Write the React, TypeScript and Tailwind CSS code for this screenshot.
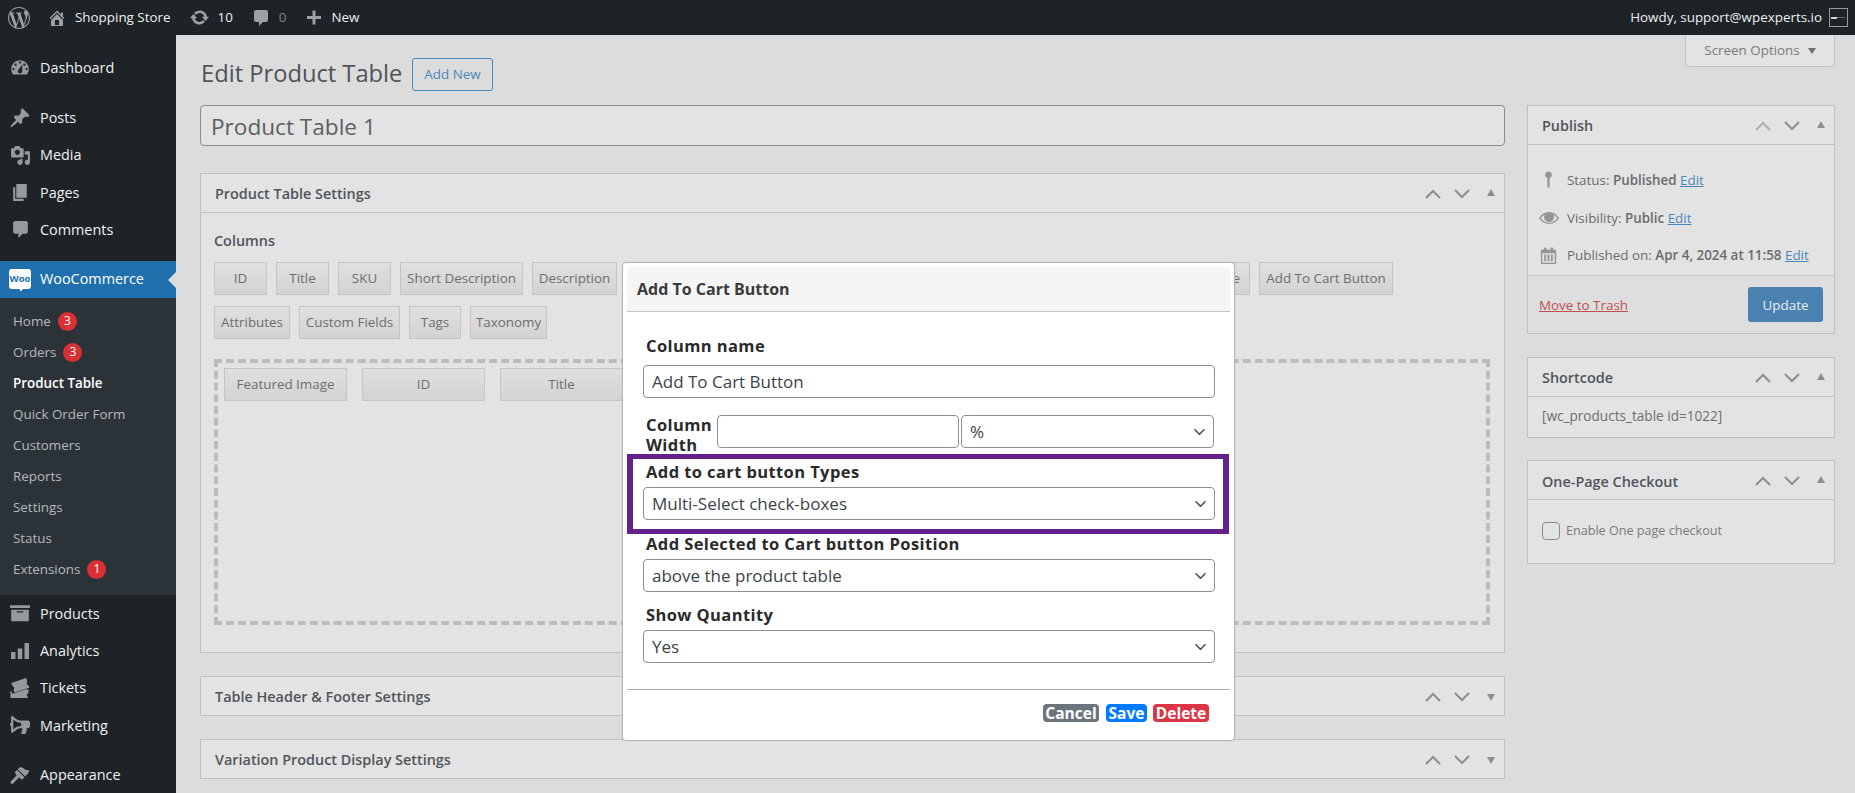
import type { ReactNode } from 'react';
import { SiWordpress } from 'react-icons/si';
import { FaBullhorn } from 'react-icons/fa';

const icons: Record<string, string> = {
    home: 'M16 8.5l1.53 1.53-1.06 1.06L10 4.62l-6.47 6.47-1.06-1.06L10 2.5l4 4v-2h2v4zm-6-2.46l6 5.99V18H4v-5.97zM12 17v-5H8v5h4z',
    update: 'M10.2 3.28c3.53 0 6.43 2.61 6.92 6h2.08l-3.5 4-3.5-4h2.32c-.45-1.97-2.21-3.45-4.32-3.45-1.45 0-2.73.71-3.54 1.78L4.95 5.66C6.23 4.2 8.11 3.28 10.2 3.28zm-.4 13.44c-3.52 0-6.43-2.61-6.92-6H.8l3.5-4c1.17 1.33 2.33 2.67 3.5 4H5.48c.45 1.97 2.21 3.45 4.32 3.45 1.45 0 2.73-.71 3.54-1.78l1.71 1.95c-1.28 1.46-3.15 2.38-5.25 2.38z',
    comment: 'M5 2h10c1.1 0 2 .9 2 2v8c0 1.1-.9 2-2 2h-3l-4 4v-4H5c-1.1 0-2-.9-2-2V4c0-1.1.9-2 2-2z',
    plus: 'M17 8v3h-5.500v5.500h-3V11H3V8h5.500V2.500h3V8H17z',
    dashboard: 'M3.76 16h12.48c1.1-1.37 1.76-3.11 1.76-5 0-4.42-3.58-8-8-8s-8 3.58-8 8c0 1.89.66 3.63 1.76 5zM10 4c.55 0 1 .45 1 1s-.45 1-1 1-1-.45-1-1 .45-1 1-1zM6 6c.55 0 1 .45 1 1s-.45 1-1 1-1-.45-1-1 .45-1 1-1zm8 0c.55 0 1 .45 1 1s-.45 1-1 1-1-.45-1-1 .45-1 1-1zm-5.370 5.550L12 7v6c0 1.100-.9 2-2 2s-2-.9-2-2c0-.57.24-1.080.63-1.450zM4 10c.55 0 1 .45 1 1s-.45 1-1 1-1-.45-1-1 .45-1 1-1zm12 0c.55 0 1 .45 1 1s-.45 1-1 1-1-.45-1-1 .45-1 1-1z',
    posts: 'M10.440 3.020l1.820-1.820 6.360 6.350-1.830 1.820c-1.050-.68-2.480-.57-3.410.36l-.75.75c-.92.93-1.040 2.350-.35 3.410l-1.830 1.820-2.410-2.410-2.800 2.790c-.42.42-3.380 2.710-3.800 2.290s1.860-3.390 2.280-3.810l2.790-2.790L4.100 9.360l1.830-1.820c1.050.69 2.480.57 3.400-.36l.75-.75c.93-.92 1.050-2.350.36-3.410z',
    media: 'M13 11V4c0-.55-.45-1-1-1h-1.670L9 1H5L3.670 3H2c-.55 0-1 .45-1 1v7c0 .55.45 1 1 1h10c.55 0 1-.45 1-1zM7 4.500c1.380 0 2.500 1.120 2.500 2.500S8.380 9.500 7 9.500 4.500 8.380 4.500 7 5.620 4.500 7 4.500zM14 6h5v10.500c0 1.380-1.120 2.500-2.500 2.500S14 17.880 14 16.500s1.120-2.500 2.500-2.500c.17 0 .34.02.5.05V9h-3V6zm-4 8.050V13h2v3.500c0 1.380-1.120 2.500-2.500 2.500S7 17.880 7 16.500 8.120 14 9.500 14c.17 0 .34.02.5.05z',
    pages: 'M6 15V2h10v13H6zm-1 1h8v2H3V5h2v11z',
    products: 'M19 3v2.500H1V3h18zM2 7h16v10.500H2V7zm11 2.500v-1H7v1h6z',
    analytics: 'M1 11h4.500v7H1v-7zm6.750-3.500h4.500V18h-4.500V7.500zM14.500 2H19v16h-4.500V2z',
    tickets: 'M2 5.500L15.500 1l1.200 3.100a1.900 1.900 0 0 0 .9 3.300l.9 2.300-13.500 4.500-.9-2.400a1.900 1.900 0 0 0-.9-3.300L2 5.500zM.6 13.500l1.600-.5.9 2.300 13-4.300.1.300 1.800.3-.6 3.100a1.900 1.900 0 0 0-.4 3.300L17.500 19H1.500l-.4-2.100a1.900 1.900 0 0 0 .2-2.400l-.7-1z',
    appearance: 'M14.480 11.060L7.410 3.990l1.500-1.500c.5-.56 2.300-.47 3.510.32 1.210.8 1.430 1.280 2.660 1.810 1.240.53 2.560.37 3.070.24l-.03.46c-.1 1.400-.7 2.500-1.400 3.300-1 1.100-1.200 1.400-2.230 2.440zm-.71.710L6.700 4.700 4.930 6.470c-.39.39-.39 1.020 0 1.410l1.060 1.060c.39.39.39 1.020 0 1.410-1.770 1.770-3.540 3.530-5.300 5.300-.39.39-.39 1.020 0 1.410l.71.71c.39.39 1.020.39 1.410 0 1.770-1.760 3.530-3.530 5.300-5.300.39-.39 1.020-.39 1.410 0l1.060 1.060c.39.39 1.020.39 1.410 0z',
    pin: 'M10 1.500a3.500 3.500 0 0 1 1.200 6.790V17.500c0 .7-.5 1.200-1.200 1.200s-1.200-.5-1.200-1.200V8.290A3.500 3.500 0 0 1 10 1.500z',
    eye: 'M19.700 9.400C17.700 6 14 3.900 10 3.900S2.300 6 .3 9.400L0 10l.3.600c2 3.400 5.700 5.500 9.700 5.500s7.700-2.100 9.700-5.500l.3-.600-.3-.600zM10 14.800c-3.300 0-6.400-1.800-8.200-4.800 1-1.500 2.300-2.700 3.900-3.500C5.300 7.200 5 8.100 5 9c0 2.800 2.200 5 5 5s5-2.200 5-5c0-.9-.3-1.800-.7-2.500 1.600.8 2.900 2 3.900 3.500-1.800 3-4.900 4.800-8.200 4.800z',
    calendar: 'M15 4h3v15H2V4h3V3c0-.41.15-.76.44-1.060.29-.29.65-.44 1.060-.44s.77.15 1.060.44c.29.3.44.65.44 1.060v1h4V3c0-.41.15-.76.44-1.060.29-.29.65-.44 1.060-.44s.77.15 1.060.44c.29.3.44.65.44 1.060v1zM3.500 7.500v10h13v-10h-13zM5.500 9h2v7h-2V9zm3.500 0h2v7H9V9zm3.500 0h2v7h-2V9z',
};

function Dash({ name, size = 20, className = '' }: { name: string; size?: number; className?: string }) {
    return (
        <svg viewBox="0 0 20 20" width={size} height={size} fill="currentColor" className={className}>
            <path d={icons[name]} />
        </svg>
    );
}

function WooLogo() {
    return (
        <svg viewBox="0 0 22 23" width={22} height={23}>
            <path d="M3 0h16a3 3 0 0 1 3 3v14a3 3 0 0 1-3 3h-5l-2.500 2.500-.8-2.500H3a3 3 0 0 1-3-3V3a3 3 0 0 1 3-3z" fill="#fff" />
            <text x="11" y="13" textAnchor="middle" fontSize="9.500" fontWeight="700" fill="#2271b1" fontFamily="'Open Sans', sans-serif">Woo</text>
        </svg>
    );
}

function Badge({ n }: { n: number }) {
    return (
        <span className="ml-[7px] flex h-[19px] w-[19px] items-center justify-center rounded-full bg-[#d92f35] text-[12px] leading-none text-white">
            {n}
        </span>
    );
}

function MenuItem({ icon, label }: { icon: ReactNode; label: string }) {
    return (
        <div className="flex h-[37.3px] items-center text-[14.4px] text-[#f0f0f1]">
            <span className="flex w-[40px] justify-center text-[#959a9e]">{icon}</span>
            {label}
        </div>
    );
}

function SubItem({ label, badge, active }: { label: string; badge?: number; active?: boolean }) {
    return (
        <div className={`flex h-[31px] items-center pl-[13px] text-[13.4px] ${active ? 'font-semibold text-white' : 'text-[#b4b9be]'}`}>
            {label}
            {badge ? <Badge n={badge} /> : null}
        </div>
    );
}

function Sidebar() {
    return (
        <aside className="w-[176px] shrink-0 bg-[#1d2327]">
            <div className="pt-[14px]">
                <MenuItem icon={<Dash name="dashboard" size={22} />} label="Dashboard" />
            </div>
            <div className="pt-[12.8px]">
                <MenuItem icon={<Dash name="posts" size={22} />} label="Posts" />
                <MenuItem icon={<Dash name="media" size={21} />} label="Media" />
                <MenuItem icon={<Dash name="pages" size={21} />} label="Pages" />
                <MenuItem icon={<Dash name="comment" size={21} />} label="Comments" />
            </div>
            <div className="relative mt-[12.5px] flex h-[37px] items-center bg-[#1f70ad] text-[14.4px] text-white">
                <span className="flex w-[40px] justify-center pt-[2px]"><WooLogo /></span>
                WooCommerce
                <span className="absolute right-0 top-[11px] h-0 w-0 border-y-[8px] border-r-[8px] border-y-transparent border-r-[#dcdcdc]" />
            </div>
            <div className="bg-[#2c3338] pb-[10px] pt-[8px]">
                <SubItem label="Home" badge={3} />
                <SubItem label="Orders" badge={3} />
                <SubItem label="Product Table" active />
                <SubItem label="Quick Order Form" />
                <SubItem label="Customers" />
                <SubItem label="Reports" />
                <SubItem label="Settings" />
                <SubItem label="Status" />
                <SubItem label="Extensions" badge={1} />
            </div>
            <MenuItem icon={<Dash name="products" size={22} />} label="Products" />
            <MenuItem icon={<Dash name="analytics" size={20} />} label="Analytics" />
            <MenuItem icon={<Dash name="tickets" size={22} />} label="Tickets" />
            <MenuItem icon={<FaBullhorn size={20} className="-scale-x-100" />} label="Marketing" />
            <div className="pt-[12.5px]">
                <MenuItem icon={<Dash name="appearance" size={21} />} label="Appearance" />
            </div>
        </aside>
    );
}

function TopBar() {
    return (
        <header className="flex h-[35px] shrink-0 items-center bg-[#1d2327] text-[13.4px] text-[#f0f0f1]">
            <SiWordpress size={22} className="ml-[8px] text-[#9ba0a5]" />
            <Dash name="home" size={20} className="ml-[17px] text-[#9ba0a5]" />
            <span className="ml-[8px]">Shopping Store</span>
            <Dash name="update" size={21} className="ml-[18px] text-[#9ba0a5]" />
            <span className="ml-[8px]">10</span>
            <Dash name="comment" size={20} className="ml-[18px] text-[#9ba0a5]" />
            <span className="ml-[8px] text-[#7d8387]">0</span>
            <Dash name="plus" size={20} className="ml-[17px] text-[#9ba0a5]" />
            <span className="ml-[8px]">New</span>
            <span className="ml-auto">Howdy, support@wpexperts.io</span>
            <span className="mx-[7px] flex h-[19px] w-[19px] items-center border border-[#9a9a9a] bg-[#1d2327] pl-[1px]">
                <span className="h-[2px] w-[6px] bg-[#d5d5d5]" />
                <span className="h-[1px] w-[8px] bg-[#666]" />
            </span>
        </header>
    );
}

function Chip({ label, className = '' }: { label: string; className?: string }) {
    return (
        <div className={`flex h-[33px] items-center justify-center whitespace-nowrap border border-[#c4c4c4] bg-gradient-to-b from-[#e0e0e0] to-[#d3d3d3] px-[6px] text-[13.4px] text-[#6e6e6e] ${className}`}>
            {label}
        </div>
    );
}

function Box({ title, children, dim, collapsed }: { title: string; children?: ReactNode; dim?: boolean; collapsed?: boolean }) {
    return (
        <section className="border border-[#c0c0c0] bg-[#e3e3e3]">
            <div className={`flex items-center justify-between pl-[14px] ${children ? 'h-[39px] border-b border-[#c0c0c0] pt-[2px]' : 'h-[38px] pt-[1px]'}`}>
                <h2 className="text-[14.4px] font-semibold text-[#50555a]">{title}</h2>
                <div className="flex items-center text-[#8e8e8e]">
                    <svg viewBox="0 0 16 10" width={16} height={10} fill="none" stroke="currentColor" strokeWidth={2} className={dim ? 'opacity-60' : ''}>
                        <path d="M1 9l7-7 7 7" />
                    </svg>
                    <svg viewBox="0 0 16 10" width={16} height={10} fill="none" stroke="currentColor" strokeWidth={2} className="ml-[13px]">
                        <path d="M1 1l7 7 7-7" />
                    </svg>
                    {collapsed ? (
                        <span className="ml-[17px] mr-[9px] mt-[2px] h-0 w-0 border-x-[4.500px] border-t-[7px] border-x-transparent border-t-[#8e8e8e]" />
                    ) : (
                        <span className="ml-[17px] mr-[9px] mb-[3px] h-0 w-0 border-x-[4.500px] border-b-[7px] border-x-transparent border-b-[#8e8e8e]" />
                    )}
                </div>
            </div>
            {children}
        </section>
    );
}

function Chevron() {
    return (
        <svg viewBox="0 0 14 10" width={13} height={9} fill="none" stroke="#50575e" strokeWidth={1.800} className="pointer-events-none absolute right-[8px] top-1/2 -translate-y-1/2">
            <path d="M1.500 2l5.500 5.500L12.500 2" />
        </svg>
    );
}

function Field({ label, value }: { label: string; value: string }) {
    return (
        <div>
            <div className="px-[3px] text-[16.5px] font-bold leading-[20px] tracking-[0.4px] text-[#2a2a2a]">{label}</div>
            <div className="relative mt-[5px]">
                <select defaultValue={value} className="h-[33px] w-full appearance-none rounded-[4px] border border-[#8c8f94] bg-white pl-[8px] text-[17px] text-[#3c434a]">
                    <option>{value}</option>
                </select>
                <Chevron />
            </div>
        </div>
    );
}

function Modal() {
    return (
        <div className="absolute left-[446px] top-[227px] h-[479px] w-[613px] rounded-[4px] border border-[#b5b5b5] bg-white p-[4px] shadow-[0_0_2px_rgba(0,0,0,0.1)]">
            <div className="flex h-[45px] items-center rounded-t-[4px] border-b border-[#c8c8c8] bg-[#f5f5f5] pl-[10px] text-[16px] font-bold text-[#3a3a3a]">
                Add To Cart Button
            </div>
            <div className="pl-[16px] pr-[15px] pt-[24px]">
                <div className="px-[3px] text-[16.5px] font-bold leading-[20px] tracking-[0.4px] text-[#2a2a2a]">Column name</div>
                <input defaultValue="Add To Cart Button" className="mt-[9px] h-[33px] w-full rounded-[4px] border border-[#8c8f94] bg-white pl-[8px] text-[17px] text-[#3c434a]" />
                <div className="mt-[17px] flex h-[33px]">
                    <div className="w-[74px] shrink-0 px-[3px] text-[16.5px] font-bold leading-[20px] tracking-[0.4px] text-[#2a2a2a]">Column Width</div>
                    <input className="h-[33px] w-[242px] rounded-[4px] border border-[#8c8f94] bg-white" />
                    <div className="relative ml-[2px] w-[253px]">
                        <select defaultValue="%" className="h-[33px] w-full appearance-none rounded-[4px] border border-[#8c8f94] bg-white pl-[8px] text-[17px] text-[#3c434a]">
                            <option>%</option>
                        </select>
                        <Chevron />
                    </div>
                </div>
                <div className="mt-[14px]">
                    <Field label="Add to cart button Types" value="Multi-Select check-boxes" />
                </div>
                <div className="mt-[14px]">
                    <Field label="Add Selected to Cart button Position" value="above the product table" />
                </div>
                <div className="mt-[13px]">
                    <Field label="Show Quantity" value="Yes" />
                </div>
            </div>
            <div className="mt-[26px] border-t border-[#aeaeae]" />
            <div className="flex justify-end pr-[21px] pt-[14px] text-[15.5px] font-bold leading-[18px] text-white">
                <button className="w-[56px] whitespace-nowrap rounded-[4px] bg-[#6c757d]">Cancel</button>
                <button className="ml-[7px] w-[41px] whitespace-nowrap rounded-[4px] bg-[#007bff]">Save</button>
                <button className="ml-[6px] w-[56px] whitespace-nowrap rounded-[4px] bg-[#dc3545]">Delete</button>
            </div>
            {/* annotation around the button type field */}
            <div className="absolute left-[4px] top-[191px] h-[80px] w-[602px] border-x-[6px] border-y-[5px] border-[#65218b]" />
        </div>
    );
}

function PublishRow({ icon, children }: { icon: string; children: ReactNode }) {
    return (
        <div className="flex h-[37.8px] items-center text-[13.4px] text-[#6b6b6b]">
            <span className="flex w-[28px] justify-start text-[#959595]">
                <Dash name={icon} size={icon === 'eye' ? 20 : 19} />
            </span>
            <span>{children}</span>
        </div>
    );
}

function EditLink() {
    return <a className="text-[#4a87bb] underline">Edit</a>;
}

export default function App() {
    return (
        <div className="flex h-[793px] w-[1855px] flex-col overflow-hidden font-['Open_Sans',sans-serif]">
            <TopBar />
            <div className="flex min-h-0 flex-1">
                <Sidebar />
                <main className="relative flex-1 bg-[#dcdcdc] pl-[24px] pr-[20px] pt-[23px]">
                    <div className="absolute right-[20px] top-0 flex h-[32px] w-[150px] items-center justify-center rounded-b-[4px] border border-t-0 border-[#c3c3c3] bg-[#e3e3e3] text-[13.4px] text-[#7a7a7a]">
                        Screen Options
                        <span className="ml-[8px] h-0 w-0 border-x-[4.500px] border-t-[6px] border-x-transparent border-t-[#707070]" />
                    </div>
                    <div className="flex h-[32px] items-center">
                        <h1 className="pl-[1px] text-[23.7px] text-[#4d5358]">Edit Product Table</h1>
                        <a className="ml-[10px] flex h-[33px] items-center rounded-[3px] border border-[#4a87bb] px-[11px] text-[13.4px] text-[#4a87bb]">Add New</a>
                    </div>
                    <div className="mt-[15px] flex gap-[22px]">
                        <div className="w-[1305px]">
                            <div className="flex h-[41px] items-center rounded-[4px] border border-[#8c8c8c] bg-[#e3e3e3] pl-[10px] pt-[3px] text-[22.6px] text-[#5b5f63]">Product Table 1</div>
                            <div className="mt-[27px]">
                                <Box title="Product Table Settings">
                                    <div className="h-[439px] px-[13px] pt-[18px]">
                                        <h3 className="text-[14.4px] font-semibold leading-[20px] text-[#50555a]">Columns</h3>
                                        <div className="mt-[11px] flex w-[1200px] flex-wrap gap-x-[9px] gap-y-[11px]">
                                            <Chip label="ID" className="w-[53px]" />
                                            <Chip label="Title" className="w-[53px]" />
                                            <Chip label="SKU" className="w-[53px]" />
                                            <Chip label="Short Description" className="w-[123px]" />
                                            <Chip label="Description" className="w-[85px]" />
                                            <Chip label="Categories" className="w-[535px]" />
                                            <Chip label="Sale Price" className="w-[80px]" />
                                            <Chip label="Add To Cart Button" className="w-[134px]" />
                                            <Chip label="Attributes" className="w-[76px]" />
                                            <Chip label="Custom Fields" className="w-[101px]" />
                                            <Chip label="Tags" className="w-[52px]" />
                                            <Chip label="Taxonomy" className="w-[77px]" />
                                        </div>
                                        <div className="mt-[20px] flex h-[266px] w-[1276px] gap-[15px] border-[4px] border-dashed border-[#bcbcbc] px-[6px] pt-[5px]">
                                            <Chip label="Featured Image" className="w-[123px]" />
                                            <Chip label="ID" className="w-[123px]" />
                                            <Chip label="Title" className="w-[123px]" />
                                        </div>
                                    </div>
                                </Box>
                            </div>
                            <div className="mt-[23px]">
                                <Box title="Table Header & Footer Settings" collapsed />
                            </div>
                            <div className="mt-[23px]">
                                <Box title="Variation Product Display Settings" collapsed />
                            </div>
                        </div>
                        <div className="flex w-[308px] flex-col gap-[22.5px]">
                            <Box title="Publish" dim>
                                <div className="px-[11px] pb-[1px] pt-[16px]">
                                    <PublishRow icon="pin">Status: <b className="font-semibold">Published</b> <EditLink /></PublishRow>
                                    <PublishRow icon="eye">Visibility: <b className="font-semibold">Public</b> <EditLink /></PublishRow>
                                    <PublishRow icon="calendar">Published on: <b className="font-semibold">Apr 4, 2024 at 11:58</b> <EditLink /></PublishRow>
                                </div>
                                <div className="flex h-[58px] items-center justify-between border-t border-[#c9c9c9] bg-[#dedede] px-[11px]">
                                    <a className="text-[13.4px] text-[#c0504f] underline">Move to Trash</a>
                                    <button className="h-[35px] w-[75px] rounded-[3px] bg-[#4a81b0] text-[13.4px] text-[#e8eef4]">Update</button>
                                </div>
                            </Box>
                            <Box title="Shortcode">
                                <div className="flex h-[40px] items-center pb-[1px] pl-[14px] text-[13.6px] text-[#6e6e6e]">[wc_products_table id=1022]</div>
                            </Box>
                            <Box title="One-Page Checkout">
                                <label className="flex h-[63px] items-center pb-[1px] pl-[14px] text-[12.6px] text-[#7a7a7a]">
                                    <span className="mr-[6px] h-[18px] w-[18px] rounded-[4px] border border-[#8c8c8c]" />
                                    Enable One page checkout
                                </label>
                            </Box>
                        </div>
                    </div>
                    <Modal />
                </main>
            </div>
        </div>
    );
}
